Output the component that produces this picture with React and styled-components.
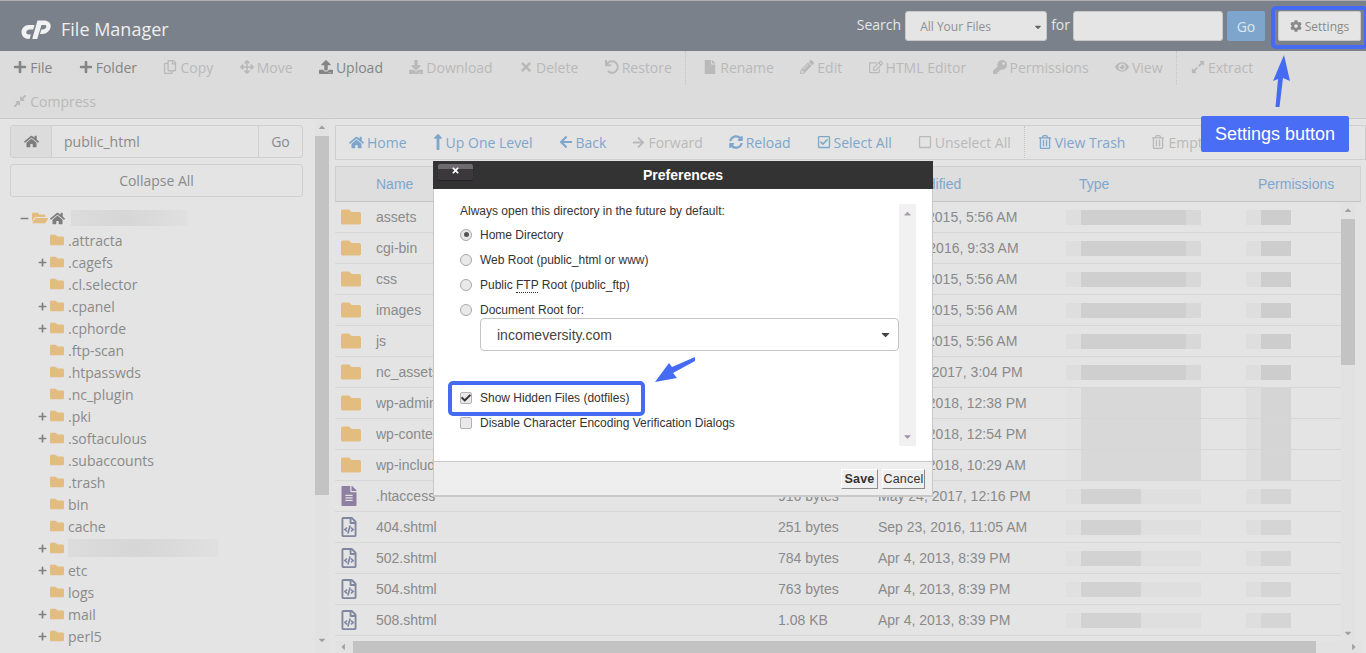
import React from "react";
import styled, { createGlobalStyle } from "styled-components";
import {
  FaPlus, FaRegCopy, FaArrowsAlt, FaDownload, FaTimes, FaUndo, FaFile, FaPencilAlt,
  FaRegEdit, FaKey, FaEye, FaExpandAlt, FaCompressAlt, FaHome, FaLongArrowAltUp, FaArrowLeft,
  FaArrowRight, FaSyncAlt, FaRegCheckSquare, FaRegSquare, FaRegTrashAlt, FaCog, FaFolder,
  FaFolderOpen, FaMinus, FaRegFileCode, FaFileAlt, FaUpload, FaCaretDown, FaCaretUp, FaCaretLeft, FaCaretRight, FaCheck,
} from "react-icons/fa";

const GlobalStyle = createGlobalStyle`
  html, body { margin: 0; padding: 0; background: #e5e5e5; overflow: hidden; }
  * { box-sizing: border-box; }
`;

const BLUE = "#456bf2";
const BLUE_LINK = "#7ea6cc";

const Page = styled.div`
  position: relative;
  width: 1366px;
  height: 653px;
  overflow: hidden;
  display: flex;
  flex-direction: column;
  font-family: "Open Sans", sans-serif;
  font-size: 14px;
  color: #8a8a8a;
  background: #e4e4e4;
`;

// top bar
const TopBar = styled.header`
  height: 51px;
  flex: none;
  display: flex;
  align-items: center;
  background: #7a818b;
  border-top: 1px solid #adadad;
  padding: 0 5px 0 21px;
`;

const Brand = styled.div`
  display: flex;
  align-items: center;
  gap: 10px;
  color: #eeeeee;
  font-size: 18px;
  margin: 6px auto 0 0;
`;

const SearchLabel = styled.span`
  color: #e6e6e6;
  font-size: 14px;
  margin-right: ${(p) => p.$mr}px;
  position: relative;
  top: -2px;
`;

const SearchSelect = styled.div`
  width: 142px;
  height: 30px;
  background: #e5e5e5;
  border: 1px solid #c9c9c9;
  border-radius: 3px;
  display: flex;
  align-items: center;
  justify-content: space-between;
  padding: 1px 3px 0 14px;
  font-size: 12px;
  color: #8f8f8f;
  margin-right: 4px;
`;

const SearchInput = styled.div`
  width: 150px;
  height: 30px;
  margin: 0 4px 0 3px;
  background: #e5e5e5;
  border: 1px solid #c9c9c9;
  border-radius: 3px;
`;

const SearchGo = styled.div`
  width: 38px;
  height: 30px;
  background: #7ea6cc;
  border-radius: 2px;
  color: #dfe7ee;
  font-size: 14px;
  display: flex;
  align-items: center;
  justify-content: center;
  margin-right: 13px;
`;

const SettingsButton = styled.div`
  width: 83px;
  height: 30px;
  background: #e5e5e5;
  border: 1px solid #c9c9c9;
  border-radius: 2px;
  display: flex;
  align-items: center;
  justify-content: center;
  gap: 3px;
  font-size: 12px;
  color: #8a8a8a;
`;

// main toolbar
const Toolbar = styled.nav`
  height: 68px;
  flex: none;
  background: #dcdcdc;
  border-bottom: 1px solid #c9c9c9;
  display: flex;
  flex-wrap: wrap;
  align-content: flex-start;
`;

const Tool = styled.span`
  height: 34px;
  padding: 0 13.2px 2px;
  display: inline-flex;
  align-items: center;
  gap: 3px;
  white-space: nowrap;
  color: ${(p) => (p.$on ? "#858585" : "#b9b9b9")};
  svg { flex: none; }
`;

const ToolSep = styled.span`
  width: 0;
  height: 34px;
  margin-right: ${(p) => p.$mr || 0}px;
  border-left: 1px dotted #c4c4c4;
`;

const RowBreak = styled.span`
  flex-basis: 100%;
  height: 0;
`;

const Body = styled.div`
  flex: 1;
  display: flex;
  min-height: 0;
`;

// left column
const Sidebar = styled.aside`
  width: 315px;
  flex: none;
  padding: 6px 12px 0 10px;
  display: flex;
  flex-direction: column;
`;

const PathBox = styled.div`
  height: 33px;
  flex: none;
  display: flex;
  border: 1px solid #cfcfcf;
  border-radius: 3px;
  font-size: 14px;
`;

const PathHome = styled.div`
  width: 41px;
  background: #dcdcdc;
  border-right: 1px solid #cfcfcf;
  display: flex;
  align-items: center;
  justify-content: center;
  color: #7d7d7d;
`;

const PathInput = styled.div`
  flex: 1;
  padding-left: 12px;
  display: flex;
  align-items: center;
`;

const PathGo = styled.div`
  width: 44px;
  border-left: 1px solid #cfcfcf;
  display: flex;
  align-items: center;
  justify-content: center;
`;

const Collapse = styled.div`
  height: 33px;
  flex: none;
  margin-top: 6px;
  border: 1px solid #cfcfcf;
  border-radius: 3px;
  display: flex;
  align-items: center;
  justify-content: center;
`;

const Tree = styled.ul`
  list-style: none;
  margin: 10px 0 0;
  padding: 0;
`;

const TreeRow = styled.li`
  height: 22px;
  display: flex;
  align-items: center;
  padding-left: ${(p) => (p.$root ? 10 : 28)}px;
  color: #8a8a8a;
`;

const Toggle = styled.span`
  width: 12px;
  flex: none;
  display: flex;
  color: #808080;
`;

const FolderIcon = styled(FaFolder)`
  flex: none;
  color: #e3bd80;
  font-size: 14px;
  margin-right: 4px;
`;

const OpenFolderIcon = styled(FaFolderOpen)`
  flex: none;
  color: #e3bd80;
  font-size: 16px;
  margin-right: 2px;
`;

const RootHomeIcon = styled(FaHome)`
  flex: none;
  color: #7d7d7d;
  font-size: 15px;
  margin-right: 6px;
`;

const Smudge = styled.span`
  display: block;
  width: ${(p) => p.$w}px;
  height: ${(p) => p.$h || 16}px;
  background: linear-gradient(90deg, #dcdcdc, #d6d6d6 45%, #dbdbdb 75%, #e0e0e0);
`;

const Scrollbar = styled.div`
  position: relative;
  flex: none;
  width: 14px;
  margin-right: 6px;
  background: #e2e2e2;
`;

const Thumb = styled.div`
  position: absolute;
  left: 0;
  right: 0;
  top: ${(p) => p.$top}px;
  height: ${(p) => p.$h}px;
  background: #c3c3c3;
`;

const ScrollArrow = styled.span`
  position: absolute;
  left: 2px;
  ${(p) => (p.$down ? `bottom: ${p.$off}px;` : `top: ${p.$off}px;`)}
  display: flex;
  color: #a0a0a0;
  font-size: 10px;
`;

// right column
const Content = styled.main`
  flex: 1;
  min-width: 0;
  display: flex;
  flex-direction: column;
  padding-top: 6px;
`;

const NavBar = styled.div`
  height: 35px;
  flex: none;
  display: flex;
  align-items: center;
  border: 1px solid #cfcfcf;
  overflow: hidden;
  white-space: nowrap;
`;

const NavItem = styled(Tool)`
  padding: 0 13px 1px;
  color: ${(p) => (p.$on ? BLUE_LINK : "#b9b9b9")};
`;

const UpIcon = styled(FaLongArrowAltUp)`
  width: 10px;
  height: 18px;
`;

const TableHead = styled.div`
  height: 36px;
  flex: none;
  margin: 6px 5px 0 0;
  display: grid;
  grid-template-columns: 442px 100px 188px 180px 100px;
  align-items: center;
  background: #dedede;
  border: 1px solid #cfcfcf;
  border-bottom: 1px solid #c4c4c4;
  color: ${BLUE_LINK};
  font-family: "Liberation Sans", Arial, sans-serif;
`;

const HeadCell = styled.span`
  padding-left: ${(p) => p.$pad}px;
  font-size: 14px;
`;

const TableBody = styled.div`
  flex: 1;
  min-height: 0;
  display: flex;
  margin-right: 5px;
`;

const Rows = styled.div`
  flex: 1;
  min-width: 0;
  overflow: hidden;
`;

const Row = styled.div`
  height: 31px;
  display: grid;
  grid-template-columns: 442px 100px 188px 180px 100px;
  align-items: center;
  border-bottom: 1px solid #d6d6d6;
  padding-left: 1px;
  font-family: "Liberation Sans", Arial, sans-serif;
  font-size: 14px;
  color: #8a8a8a;
  white-space: nowrap;
`;

const NameCell = styled.span`
  display: flex;
  align-items: center;
`;

const RowFolder = styled(FaFolder)`
  flex: none;
  width: 20px;
  height: 20px;
  margin: 0 15px 0 5px;
  color: #e3bd80;
`;

const RowTextFile = styled(FaFileAlt)`
  flex: none;
  width: 20px;
  height: 20px;
  margin: 0 17px 0 3px;
  color: #8f7fa0;
`;

const RowCodeFile = styled(FaRegFileCode)`
  flex: none;
  width: 20px;
  height: 20px;
  margin: 0 17px 0 3px;
  color: #7f86a0;
`;

const Pixels = styled.span`
  display: flex;
  height: ${(p) => (p.$tall ? 30 : 15)}px;
`;

const Pixel = styled.span`
  width: ${(p) => p.$w}px;
  background: ${(p) => p.$c};
`;

const HScroll = styled.div`
  position: relative;
  height: 12px;
  flex: none;
  background: #e2e2e2;
  margin: 0 5px 0 1px;
`;

const HThumb = styled.div`
  position: absolute;
  left: 17px;
  width: 963px;
  top: 0;
  bottom: 0;
  background: #c3c3c3;
`;

const HArrow = styled.span`
  position: absolute;
  top: 1px;
  ${(p) => (p.$right ? "right: 2px;" : "left: 2px;")}
  display: flex;
  color: #a0a0a0;
  font-size: 10px;
`;

// preferences dialog
const Modal = styled.div`
  position: absolute;
  left: 433px;
  top: 161px;
  width: 500px;
  height: 336px;
  display: flex;
  flex-direction: column;
  font-family: "Liberation Sans", Arial, sans-serif;
  font-size: 12px;
  color: #333;
  background: #fff;
  border: solid #c8c8c8;
  border-width: 0 1px 2px 1px;
`;

const ModalHead = styled.div`
  position: relative;
  height: 28px;
  flex: none;
  margin: 0 -1px;
  background: #333333;
  color: #fff;
  font-weight: bold;
  font-size: 14px;
  display: flex;
  align-items: center;
  justify-content: center;
`;

const CloseBtn = styled.span`
  position: absolute;
  left: 5px;
  top: 3px;
  width: 35px;
  height: 16px;
  background: linear-gradient(#6e6a6e 0, #6e6a6e 5px, #3b383b 5px, #3b383b 100%);
  border-radius: 2px;
  box-shadow: 0 1px 1px #222;
  color: #fff;
  display: flex;
  align-items: flex-start;
  justify-content: center;
  padding-top: 2px;
  font-size: 9px;
`;

const ModalMain = styled.div`
  flex: 1;
  display: flex;
  padding: 15px 16px 15px 26px;
`;

const Form = styled.div`
  flex: 1;
  min-width: 0;
`;

const Intro = styled.div`
  height: 14px;
  line-height: 14px;
  margin-bottom: 4px;
`;

const Option = styled.label`
  height: 25px;
  display: flex;
  align-items: center;
  gap: 8px;
`;

const Radio = styled.span`
  width: 12px;
  height: 12px;
  flex: none;
  border-radius: 50%;
  border: 1px solid #a9a9a9;
  background: #e9e9e9;
  display: flex;
  align-items: center;
  justify-content: center;
  &::after {
    content: "";
    width: 5px;
    height: 5px;
    border-radius: 50%;
    background: ${(p) => (p.$checked ? "#555" : "transparent")};
  }
`;

const Check = styled.span`
  width: 12px;
  height: 12px;
  flex: none;
  border-radius: 2px;
  border: 1px solid #b5b0b5;
  background: #e9e9e9;
  color: #333;
  display: flex;
  align-items: center;
  justify-content: center;
  font-size: 10px;
`;

const Abbr = styled.span`
  border-bottom: 1px dotted #333;
  line-height: 12px;
`;

const DomainSelect = styled.div`
  width: 419px;
  height: 33px;
  margin: -4px 0 0 20px;
  border: 1px solid #c4c4c4;
  border-radius: 4px;
  display: flex;
  align-items: center;
  justify-content: space-between;
  padding: 0 6px 0 16px;
  font-size: 14px;
  color: #444;
`;

const HiddenOption = styled(Option)`
  margin-top: 34px;
`;

const ModalScroll = styled.div`
  position: relative;
  width: 17px;
  height: 242px;
  flex: none;
  background: #f1f1f1;
`;

const ModalArrow = styled.span`
  position: absolute;
  left: 3px;
  ${(p) => (p.$down ? "bottom: 4px;" : "top: 4px;")}
  display: flex;
  font-size: 11px;
  color: ${(p) => (p.$down ? "#a48fa8" : "#a8a0a8")};
`;

const ModalFoot = styled.div`
  height: 34px;
  flex: none;
  background: #eeeeee;
  border-top: 1px solid #c8c8c8;
  display: flex;
  align-items: center;
  justify-content: flex-end;
  gap: 4px;
  padding: 0 7px 0 0;
`;

const FootBtn = styled.span`
  height: 20px;
  width: ${(p) => p.$w}px;
  display: flex;
  align-items: center;
  justify-content: center;
  background: #efefef;
  border: 1px solid;
  border-color: #fff #8c8c8c #8c8c8c #fff;
  font-size: 12.5px;
  font-weight: ${(p) => (p.$primary ? "bold" : "normal")};
  color: #333;
  letter-spacing: 0.2px;
`;

// blue annotations on top of the screenshot
const Outline = styled.div`
  position: absolute;
  left: ${(p) => p.$l}px;
  top: ${(p) => p.$t}px;
  width: ${(p) => p.$w}px;
  height: ${(p) => p.$h}px;
  border: 4px solid ${BLUE};
  border-radius: 5px;
`;

const Callout = styled.div`
  position: absolute;
  left: 1201px;
  top: 116px;
  width: 148px;
  height: 36px;
  background: #4a6df5;
  border-radius: 2px;
  color: #fff;
  font-family: "Liberation Sans", Arial, sans-serif;
  font-size: 18px;
  display: flex;
  align-items: center;
  justify-content: center;
`;

const Drawn = styled.svg`
  position: absolute;
  left: 0;
  top: 0;
  pointer-events: none;
`;

const Logo = () => (
  <svg width="30" height="19" viewBox="0 0 30 19" fill="#f2f2f2">
    <path d="M13.5 5H8C3.5 5 .5 8.5 .5 12c0 4 3 7 7 7h1l1.4-4.5H8C6 14.5 5 13.5 5.3 12c.3-1.500 1.700-2.500 3.200-2.500h3.700z" />
    <path d="M16.500 .5H23c4.500 0 7.500 3 6.500 7-.8 3.500-4 6.500-8 6.500h-2.500l1.400-4.500h1.100c2 0 3.500-1 3.800-2.500.3-1.500-.8-2-1.800-2h-3l-4.300 14h-5z" />
  </svg>
);

const toolsRowOne = [
  [FaPlus, "File", true], [FaPlus, "Folder", true], [FaRegCopy, "Copy"], [FaArrowsAlt, "Move"],
  [FaUpload, "Upload", true], [FaDownload, "Download"], [FaTimes, "Delete"], [FaUndo, "Restore"],
];
const toolsRowTwo = [
  [FaFile, "Rename"], [FaPencilAlt, "Edit"], [FaRegEdit, "HTML Editor"], [FaKey, "Permissions"], [FaEye, "View"],
];

const tree = [
  [".attracta", false], [".cagefs", true], [".cl.selector", false], [".cpanel", true], [".cphorde", true],
  [".ftp-scan", false], [".htpasswds", false], [".nc_plugin", false], [".pki", true], [".softaculous", true],
  [".subaccounts", false], [".trash", false], ["bin", false], ["cache", false], [null, true], ["etc", true],
  ["logs", false], ["mail", true], ["perl5", true],
];

const files = [
  ["assets", "4 KB", "Oct 29, 2015, 5:56 AM", true],
  ["cgi-bin", "4 KB", "Mar 11, 2016, 9:33 AM", true],
  ["css", "4 KB", "Oct 29, 2015, 5:56 AM", true],
  ["images", "4 KB", "Oct 29, 2015, 5:56 AM", true],
  ["js", "4 KB", "Oct 29, 2015, 5:56 AM", true],
  ["nc_assets", "4 KB", "May 24, 2017, 3:04 PM", true],
  ["wp-admin", "4 KB", "Jan 17, 2018, 12:38 PM", true],
  ["wp-content", "4 KB", "Jan 17, 2018, 12:54 PM", true],
  ["wp-includes", "4 KB", "Jan 17, 2018, 10:29 AM", true],
  [".htaccess", "916 bytes", "May 24, 2017, 12:16 PM", "text"],
  ["404.shtml", "251 bytes", "Sep 23, 2016, 11:05 AM"],
  ["502.shtml", "784 bytes", "Apr 4, 2013, 8:39 PM"],
  ["504.shtml", "763 bytes", "Apr 4, 2013, 8:39 PM"],
  ["508.shtml", "1.08 KB", "Apr 4, 2013, 8:39 PM"],
];

// the blurred out Type and Permissions columns
const typeBlur = (i) => {
  if (i < 6) return [[15, "#dedede"], [105, "#cfcfcf"], [15, "#d8d8d8"]];
  if (i < 9) return [[15, "#e2e2e2"], [120, "#d8d8d8"]];
  return [[15, "#e0e0e0"], [60, "#d2d2d2"], [60, "#dfdfdf"]];
};
const permBlur = (i) => [[15, "#dedede"], [30, i < 6 ? "#cdcdcd" : "#d5d5d5"]];

const FileIcon = ({ kind }) => {
  if (kind === true) return <RowFolder />;
  if (kind === "text") return <RowTextFile />;
  return <RowCodeFile />;
};

const isTall = (i) => i >= 6 && i < 9;

const App = () => (
  <Page>
    <GlobalStyle />
    <TopBar>
      <Brand>
        <Logo />
        File Manager
      </Brand>
      <SearchLabel $mr={4}>Search</SearchLabel>
      <SearchSelect>
        All Your Files
        <FaCaretDown size={10} color="#666" />
      </SearchSelect>
      <SearchLabel $mr={0}>for</SearchLabel>
      <SearchInput />
      <SearchGo>Go</SearchGo>
      <SettingsButton>
        <FaCog size={12} />
        Settings
      </SettingsButton>
    </TopBar>

    <Toolbar>
      {toolsRowOne.map(([Icon, label, on]) => (
        <Tool key={label} $on={on}><Icon size={14} />{label}</Tool>
      ))}
      <ToolSep $mr={4} />
      {toolsRowTwo.map(([Icon, label]) => (
        <Tool key={label}><Icon size={14} />{label}</Tool>
      ))}
      <ToolSep $mr={1} />
      <Tool><FaExpandAlt size={14} />Extract</Tool>
      <RowBreak />
      <Tool><FaCompressAlt size={14} />Compress</Tool>
    </Toolbar>

    <Body>
      <Sidebar>
        <PathBox>
          <PathHome><FaHome size={15} /></PathHome>
          <PathInput>public_html</PathInput>
          <PathGo>Go</PathGo>
        </PathBox>
        <Collapse>Collapse All</Collapse>
        <Tree>
          <TreeRow $root>
            <Toggle><FaMinus size={9} /></Toggle>
            <OpenFolderIcon />
            <RootHomeIcon />
            <Smudge $w={116} />
          </TreeRow>
          {tree.map(([name, plus], i) => (
            <TreeRow key={i}>
              <Toggle>{plus && <FaPlus size={9} />}</Toggle>
              <FolderIcon />
              {name || <Smudge $w={150} $h={18} />}
            </TreeRow>
          ))}
        </Tree>
      </Sidebar>

      <Scrollbar>
        <ScrollArrow $off={3}><FaCaretUp /></ScrollArrow>
        <Thumb $top={17} $h={359} />
        <ScrollArrow $down $off={8}><FaCaretDown /></ScrollArrow>
      </Scrollbar>

      <Content>
        <NavBar>
          <NavItem $on><FaHome size={15} />Home</NavItem>
          <NavItem $on><UpIcon />Up One Level</NavItem>
          <NavItem $on><FaArrowLeft size={14} />Back</NavItem>
          <NavItem><FaArrowRight size={13} />Forward</NavItem>
          <NavItem $on><FaSyncAlt size={14} />Reload</NavItem>
          <NavItem $on><FaRegCheckSquare size={14} />Select All</NavItem>
          <NavItem><FaRegSquare size={14} />Unselect All</NavItem>
          <ToolSep />
          <NavItem $on><FaRegTrashAlt size={14} />View Trash</NavItem>
          <NavItem><FaRegTrashAlt size={14} />Empty Trash</NavItem>
        </NavBar>

        <TableHead>
          <HeadCell $pad={40}>Name</HeadCell>
          <HeadCell $pad={0}>Size</HeadCell>
          <HeadCell $pad={0}>Last Modified</HeadCell>
          <HeadCell $pad={13}>Type</HeadCell>
          <HeadCell $pad={12}>Permissions</HeadCell>
        </TableHead>

        <TableBody>
          <Rows>
            {files.map(([name, size, date, kind], i) => (
              <Row key={name}>
                <NameCell><FileIcon kind={kind} />{name}</NameCell>
                <span>{size}</span>
                <span>{date}</span>
                <Pixels $tall={isTall(i)}>{typeBlur(i).map(([w, c], j) => <Pixel key={j} $w={w} $c={c} />)}</Pixels>
                <Pixels $tall={isTall(i)}>{permBlur(i).map(([w, c], j) => <Pixel key={j} $w={w} $c={c} />)}</Pixels>
              </Row>
            ))}
          </Rows>
          <Scrollbar>
            <ScrollArrow $off={3}><FaCaretUp /></ScrollArrow>
            <Thumb $top={17} $h={146} />
            <ScrollArrow $down $off={3}><FaCaretDown /></ScrollArrow>
          </Scrollbar>
        </TableBody>
        <HScroll>
          <HArrow><FaCaretLeft /></HArrow>
          <HThumb />
          <HArrow $right><FaCaretRight /></HArrow>
        </HScroll>
      </Content>
    </Body>

    <Modal>
      <ModalHead>
        <CloseBtn><FaTimes /></CloseBtn>
        Preferences
      </ModalHead>
      <ModalMain>
        <Form>
          <Intro>Always open this directory in the future by default:</Intro>
          <Option><Radio $checked />Home Directory</Option>
          <Option><Radio />Web Root (public_html or www)</Option>
          <Option><Radio />
            <span>Public <Abbr>FTP</Abbr> Root (public_ftp)</span>
          </Option>
          <Option><Radio />Document Root for:</Option>
          <DomainSelect>
            incomeversity.com
            <FaCaretDown size={13} color="#444" />
          </DomainSelect>
          <HiddenOption><Check><FaCheck /></Check>Show Hidden Files (dotfiles)</HiddenOption>
          <Option><Check />Disable Character Encoding Verification Dialogs</Option>
        </Form>
        <ModalScroll>
          <ModalArrow><FaCaretUp /></ModalArrow>
          <ModalArrow $down><FaCaretDown /></ModalArrow>
        </ModalScroll>
      </ModalMain>
      <ModalFoot>
        <FootBtn $primary $w={37}>Save</FootBtn>
        <FootBtn $w={43}>Cancel</FootBtn>
      </ModalFoot>
    </Modal>

    <Outline $l={1271} $t={6} $w={97} $h={43} />
    <Outline $l={448} $t={381} $w={197} $h={35} />
    <Callout>Settings button</Callout>
    <Drawn width="1366" height="653" viewBox="0 0 1366 653">
      <path d="M1275.500 107 L1278 79 L1273 81 L1284 55 L1290 81 L1283 78 L1279.500 107 Z" fill={BLUE} />
      <path d="M695 357 L695 361 L673 373 L677 378 L655 382 L669 363 L672 367 Z" fill={BLUE} />
    </Drawn>
  </Page>
);

export default App;
